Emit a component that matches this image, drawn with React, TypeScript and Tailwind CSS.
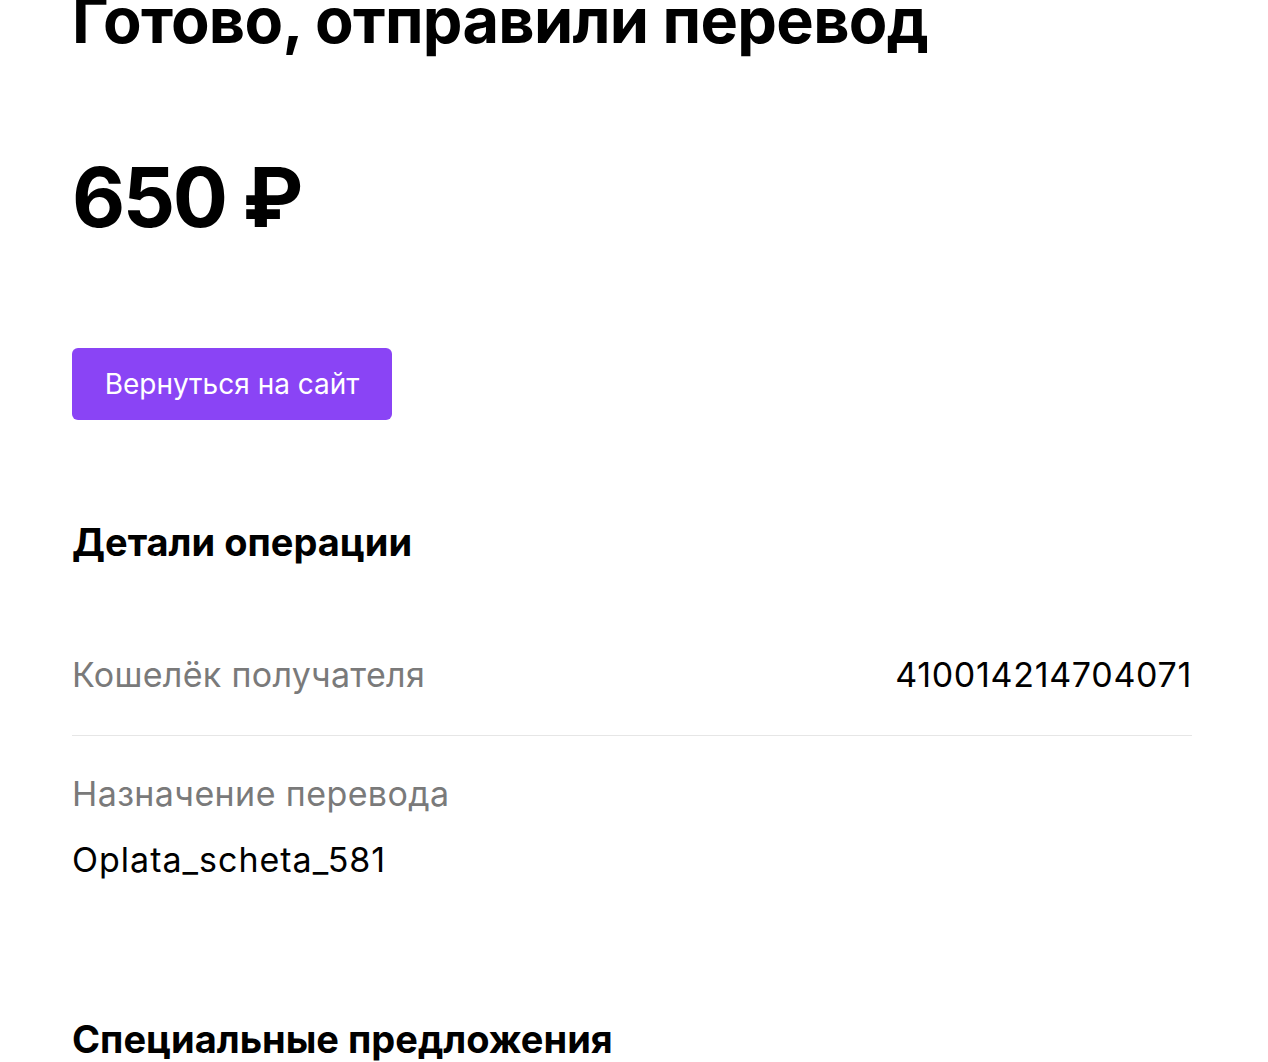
import React from 'react';

const font = { fontFamily: 'Inter, "Noto Sans", sans-serif' };

const App: React.FC = () => {
    return (
        <div className="min-h-screen w-full bg-white overflow-hidden" style={font}>
            <div className="ml-[72px] w-[1120px] flex flex-col">
                <h1 className="-mt-[16px] text-[63px] leading-[72px] font-bold text-black tracking-[-0.7px] whitespace-nowrap">
                    Готово, отправили перевод
                </h1>

                <div className="mt-[92px] text-[82px] leading-[100px] font-bold text-black tracking-[-2.5px]">
                    650 ₽
                </div>

                <div className="mt-[100px]">
                    <button className="h-[72px] w-[320px] rounded-[6px] bg-[#8a44f5] text-white text-[28px] font-normal">
                        Вернуться на сайт
                    </button>
                </div>

                <h2 className="mt-[98px] text-[38px] leading-[48px] font-bold text-black">Детали операции</h2>

                {/* Row: wallet */}
                <div className="mt-[89px] flex items-center justify-between pb-[40px] border-b border-[#e6e6e6]">
                    <span className="text-[34px] leading-[40px] text-[#7a7a7a] tracking-[0.3px]">Кошелёк получателя</span>
                    <span className="text-[34px] leading-[40px] text-black tracking-[0.7px]">410014214704071</span>
                </div>

                {/* Row: purpose */}
                <div className="mt-[38px] flex flex-col gap-[26px]">
                    <span className="text-[34px] leading-[40px] text-[#7a7a7a] tracking-[0.4px]">Назначение перевода</span>
                    <span className="text-[34px] leading-[40px] text-black tracking-[1px]">Oplata_scheta_581</span>
                </div>

                <h2 className="mt-[135px] text-[38px] leading-[48px] font-bold text-black">Специальные предложения</h2>
            </div>
        </div>
    );
};

export default App;
